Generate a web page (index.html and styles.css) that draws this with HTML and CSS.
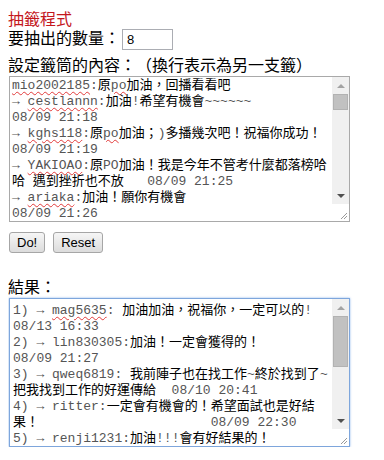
FILE: index.html
```html
<!DOCTYPE html>
<html lang="zh-Hant">
<head>
    <meta charset="UTF-8">
    <title>抽籤程式</title>
    <link rel="stylesheet" href="styles.css">
</head>
<body>

    <div class="title">抽籤程式</div>

    <div class="row">
        <span class="label">要抽出的數量：</span>
        <input type="text" class="count" value="8">
    </div>

    <div class="label-line">設定籤筒的內容：（換行表示為另一支籤）</div>

    <div class="box">
        <div class="text">
            <div><span class="m u">mio2002185</span><span class="m">:</span>原<span class="m u">po</span>加油，回播看看吧</div>
            <div><span class="m">→ </span><span class="m u">cestlannn</span><span class="m">:</span>加油<span class="m">!</span>希望有機會<span class="m">~~~~~~</span></div>
            <div><span class="m">08/09 21:18</span></div>
            <div><span class="m">→ </span><span class="m u">kghs118</span><span class="m">:</span>原<span class="m u">po</span>加油；<span class="m">)</span>多播幾次吧！祝福你成功！</div>
            <div><span class="m">08/09 21:19</span></div>
            <div><span class="m">→ </span><span class="m u">YAKIOAO</span><span class="m">:</span>原<span class="m">PO</span>加油！我是今年不管考什麼都落榜哈</div>
            <div>哈<span class="m"> </span>遇到挫折也不放<span class="m">   08/09 21:25</span></div>
            <div><span class="m">→ </span><span class="m u">ariaka</span><span class="m">:</span>加油！願你有機會</div>
            <div><span class="m">08/09 21:26</span></div>
        </div>
        <div class="bar">
            <div class="btn"><span class="arrow-up"></span></div>
            <div class="thumb thumb-small"></div>
            <div class="track"></div>
            <div class="btn"><span class="arrow-down"></span></div>
            <div class="corner">
                <svg width="17" height="17" viewBox="0 0 17 17">
                    <line x1="9" y1="15" x2="15" y2="9" stroke="#9a9a9a" stroke-width="1"/>
                    <line x1="12" y1="15" x2="15" y2="12" stroke="#9a9a9a" stroke-width="1"/>
                </svg>
            </div>
        </div>
    </div>

    <div class="buttons">
        <button>Do!</button>
        <button>Reset</button>
    </div>

    <div class="result-label">結果：</div>

    <div class="box result">
        <div class="text">
            <div><span class="m">1) → </span><span class="m u">mag5635</span><span class="m">: </span>加油加油，祝福你，一定可以的<span class="m">!</span></div>
            <div><span class="m">08/13 16:33</span></div>
            <div><span class="m">2) → lin830305:</span>加油！一定會獲得的！</div>
            <div><span class="m">08/09 21:27</span></div>
            <div><span class="m">3) → qweq6819: </span>我前陣子也在找工作<span class="m">~</span>終於找到了<span class="m">~</span></div>
            <div>把我找到工作的好運傳給<span class="m">  08/10 20:41</span></div>
            <div><span class="m">4) → ritter:</span>一定會有機會的！希望面試也是好結</div>
            <div>果！<span class="m">                      08/09 22:30</span></div>
            <div><span class="m">5) → renji1231:</span>加油<span class="m">!!!</span>會有好結果的！</div>
        </div>
        <div class="bar">
            <div class="btn"><span class="arrow-up"></span></div>
            <div class="thumb thumb-big"></div>
            <div class="track"></div>
            <div class="btn"><span class="arrow-down"></span></div>
            <div class="corner">
                <svg width="17" height="17" viewBox="0 0 17 17">
                    <line x1="9" y1="15" x2="15" y2="9" stroke="#9a9a9a" stroke-width="1"/>
                    <line x1="12" y1="15" x2="15" y2="12" stroke="#9a9a9a" stroke-width="1"/>
                </svg>
            </div>
        </div>
    </div>

</body>
</html>
```

FILE: styles.css
```css
body {
    margin: 8px;
    font-family: "Noto Sans CJK TC", "Noto Sans", sans-serif;
    font-size: 16px;
    color: #000;
    background: #fff;
    text-spacing-trim: space-all;
}

.title {
    color: #c4161c;
    line-height: 20px;
}

.row {
    display: flex;
    align-items: flex-start;
    height: 24px;
}

.label {
    line-height: 16px;
    margin-top: 1px;
}

.count {
    width: 51px;
    height: 21px;
    box-sizing: border-box;
    margin: 1px 0 0 2px;
    padding: 0 4px;
    border: 1px solid #abadb3;
    font-family: "Liberation Sans", Arial, sans-serif;
    font-size: 13px;
    color: #000;
}

.label-line {
    line-height: 24px;
}

.box {
    display: flex;
    width: 341px;
    height: 146px;
    box-sizing: border-box;
    margin-left: 1px;
    border: 1px solid #a9a9a9;
    background: #fff;
}

.text {
    flex: 1;
    overflow: hidden;
    padding: 1px 0 0 2px;
    font-family: "Liberation Mono", "Noto Sans CJK TC", monospace;
    font-size: 13px;
    line-height: 16px;
}

.text div {
    height: 16px;
    white-space: pre;
}

.m {
    color: #555;
}

.u {
    text-decoration: underline wavy #e23b3b;
    text-decoration-thickness: 1px;
    text-underline-offset: 2px;
}

.bar {
    display: flex;
    flex-direction: column;
    width: 17px;
    background: #f0f0f0;
}

.btn {
    height: 17px;
    display: flex;
    align-items: center;
    justify-content: center;
}

.arrow-up {
    width: 0;
    height: 0;
    border-left: 4px solid transparent;
    border-right: 4px solid transparent;
    border-bottom: 4px solid #a3a3a3;
}

.arrow-down {
    width: 0;
    height: 0;
    border-left: 4px solid transparent;
    border-right: 4px solid transparent;
    border-top: 4px solid #505050;
}

.thumb {
    margin: 0 1px;
    background: #c1c1c1;
    border: 1px solid #b2b2b2;
    box-sizing: border-box;
}

.thumb-small {
    height: 16px;
}

.thumb-big {
    height: 51px;
}

.track {
    flex: 1;
}

.corner {
    height: 17px;
    background: #fff;
}

.corner svg {
    display: block;
}

.buttons {
    display: flex;
    gap: 8px;
    margin: 10px 0 0 1px;
}

button {
    height: 21px;
    padding: 0 7px;
    font-family: "Liberation Sans", Arial, sans-serif;
    font-size: 13px;
    color: #000;
    background: linear-gradient(#f6f6f6, #dcdcdc);
    border: 1px solid #a6a6a6;
    border-radius: 3px;
}

.result-label {
    margin-top: 23px;
    line-height: 20px;
}

.result {
    height: 149px;
    margin-top: 2px;
    border-color: #7ea6dc;
    box-shadow: 0 0 2px rgba(90, 150, 230, 0.7);
}

.result .text {
    padding: 4px 0 0 3px;
}
```
